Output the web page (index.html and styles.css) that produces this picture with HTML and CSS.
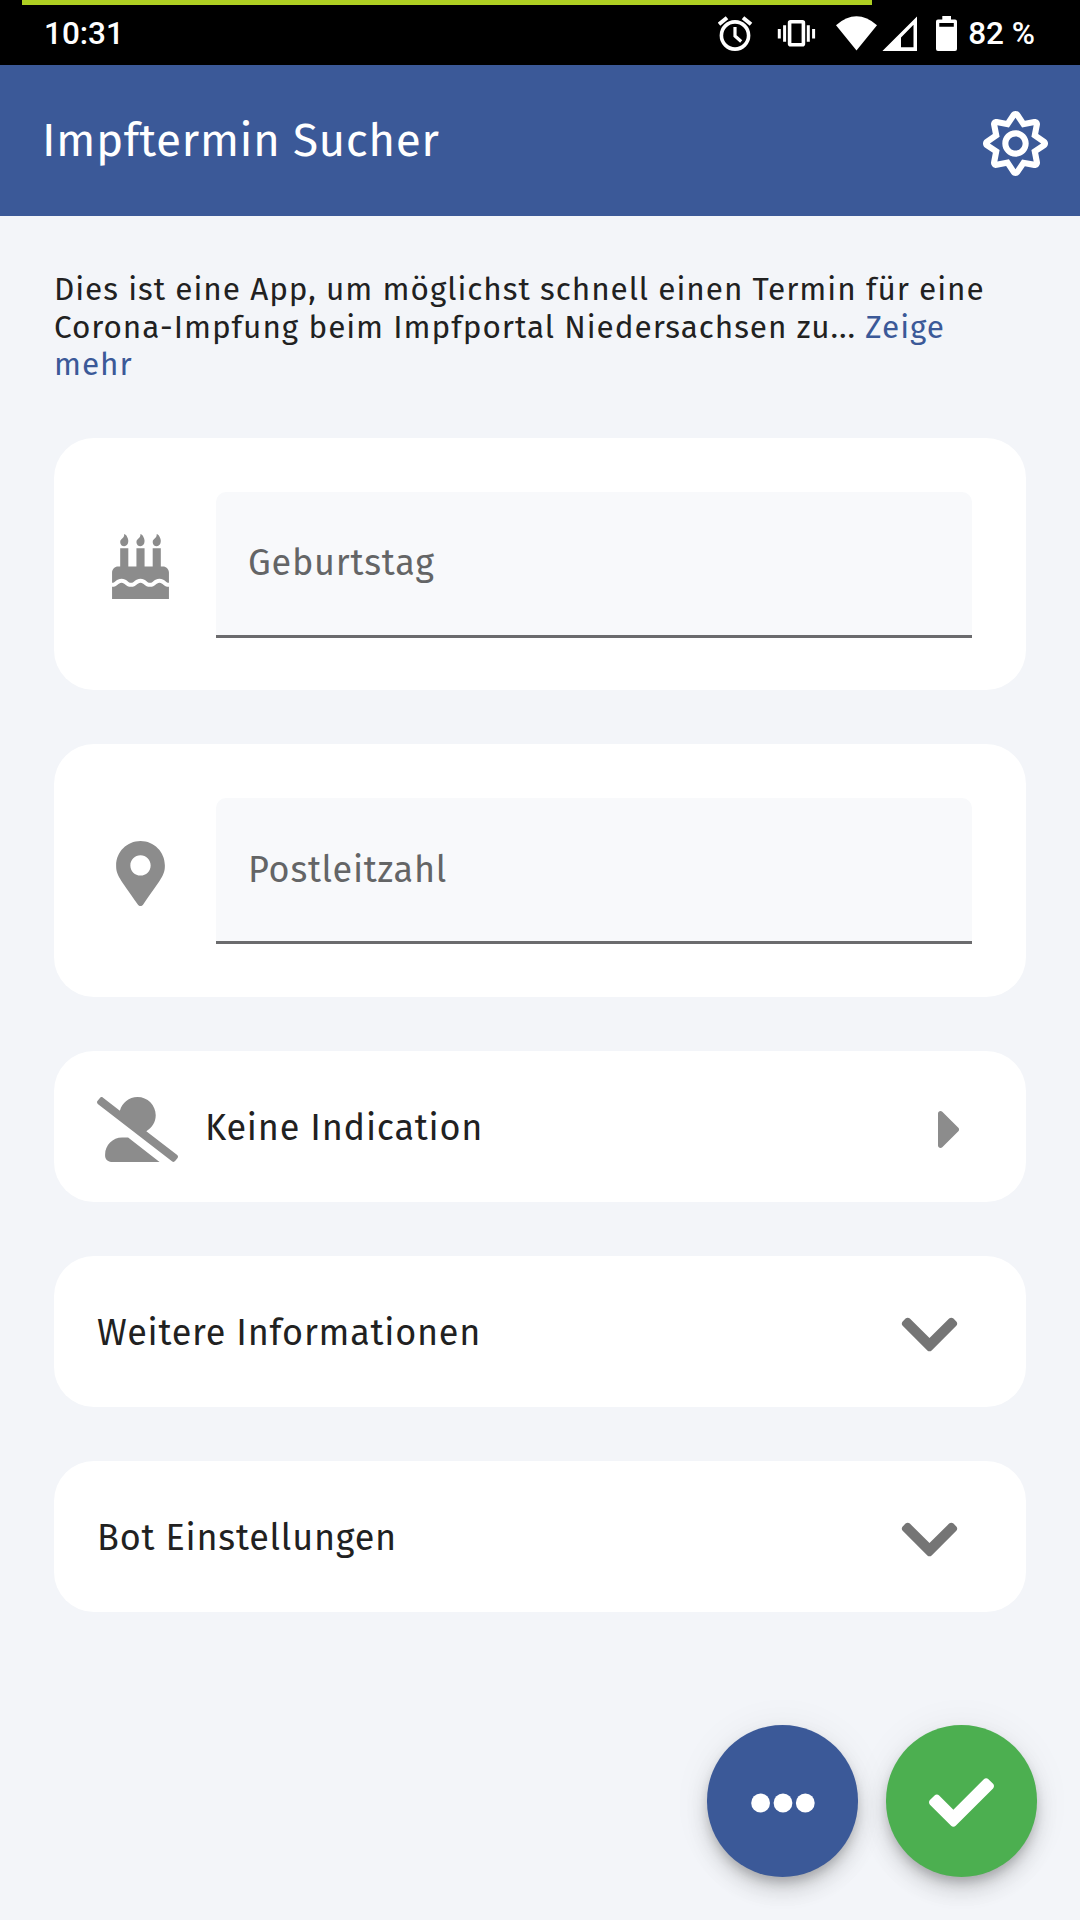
FILE: index.html
```html
<!DOCTYPE html>
<html lang="de">
<head>
<meta charset="utf-8">
<title>Impftermin Sucher</title>
<link rel="stylesheet" href="styles.css">
</head>
<body>
<div class="statusbar">
  <div class="progress"></div>
  <span class="clock">10:31</span>
  <svg class="status-icons" viewBox="718 15 240 36" width="240" height="36" fill="none" stroke="#fff">
    <g stroke-width="3.6">
      <circle cx="735" cy="34.5" r="13.6"/>
      <path d="M735 26v9l6.200 5.500" stroke-width="3.200"/>
      <path d="M719 23.200l8-6.500M751 23.200l-8-6.500" stroke-width="4"/>
    </g>
    <rect x="789.600" y="20.800" width="13.800" height="23" rx="1" stroke-width="3.600"/>
    <path d="M784.600 24.300v16.400M808.300 24.300v16.400M779.300 28v9.500M813.600 28v9.500" stroke-width="3"/>
    <path d="M836 24.200Q856.500 6.500 877 24.200L856.500 49.500z" fill="#fff" stroke="none"/>
    <path d="M882.400 50L917 15.500V50zM901 46.300h12.500V23.800L901 36.400z" fill="#fff" fill-rule="evenodd" stroke="none"/>
    <path d="M942.300 15h8.700v3.500h4q2 0 2 2V48q0 2-2 2H938q-2 0-2-2V20.500q0-2 2-2h4.300zM939.300 22v3.800h14.500V22z" fill="#fff" fill-rule="evenodd" stroke="none"/>
  </svg>
  <span class="battery">82 %</span>
</div>

<header class="appbar">
  <h1 class="title">Impftermin Sucher</h1>
  <svg class="icon" viewBox="0 0 512 512" width="65" height="65"><path d="M494.200 221.900l-59.800-40.500 13.700-71c2.600-13.200-1.600-26.800-11.100-36.400-9.600-9.500-23.200-13.700-36.200-11.100l-70.900 13.700-40.400-59.900c-15.100-22.300-51.900-22.300-67 0l-40.400 59.900-70.800-13.700C98 60.400 84.500 64.500 75 74.100c-9.500 9.600-13.700 23.100-11.100 36.300l13.700 71-59.800 40.500C6.600 229.500 0 242 0 255.500s6.700 26 17.800 33.500l59.800 40.500-13.700 71c-2.600 13.200 1.600 26.800 11.100 36.300 9.500 9.500 22.900 13.700 36.300 11.100l70.800-13.700 40.400 59.900C230 505.300 242.600 512 256 512s26-6.700 33.500-17.800l40.400-59.900 70.900 13.700c13.400 2.700 26.800-1.600 36.300-11.100 9.500-9.500 13.600-23.100 11.100-36.300l-13.700-71 59.800-40.500c11.100-7.500 17.800-20.100 17.800-33.600-.1-13.600-6.700-26.100-17.900-33.700zm-112.900 85.600l17.600 91.200-91-17.600L256 458l-51.900-77-90.900 17.600 17.600-91.200-76.800-52 76.800-52-17.600-91.200 91 17.600L256 53l51.900 76.900 91-17.600-17.600 91.100 76.800 52-76.800 52.100zM256 152c-57.300 0-104 46.700-104 104s46.700 104 104 104 104-46.700 104-104-46.700-104-104-104zm0 160c-30.900 0-56-25.100-56-56s25.100-56 56-56 56 25.100 56 56-25.100 56-56 56z"/></svg>
</header>

<main class="content">
  <p class="intro">Dies ist eine App, um möglichst schnell einen Termin für eine Corona-Impfung beim Impfportal Niedersachsen zu... <a class="more">Zeige mehr</a></p>

  <section class="card card-field">
    <svg class="icon" viewBox="0 0 448 512" width="57" height="65"><path d="M448 384c-28.020 0-31.260-32-74.500-32-43.430 0-46.825 32-74.750 32-27.695 0-31.454-32-74.750-32-42.842 0-47.218 32-74.500 32-28.148 0-31.202-32-74.750-32-43.547 0-46.653 32-74.750 32v-80c0-26.500 21.500-48 48-48h16V112h64v144h64V112h64v144h64V112h64v144h16c26.500 0 48 21.500 48 48v80zm0 128H0v-96c43.356 0 46.767-32 74.750-32 27.951 0 31.253 32 74.750 32 42.843 0 47.217-32 74.500-32 28.148 0 31.201 32 74.750 32 43.357 0 46.767-32 74.750-32 27.488 0 31.252 32 74.500 32v96zM96 96c-17.750 0-32-14.250-32-32 0-31 32-23 32-64 12 0 32 29.500 32 56s-14.250 40-32 40zm128 0c-17.750 0-32-14.250-32-32 0-31 32-23 32-64 12 0 32 29.500 32 56s-14.250 40-32 40zm128 0c-17.750 0-32-14.250-32-32 0-31 32-23 32-64 12 0 32 29.500 32 56s-14.250 40-32 40z"/></svg>
    <div class="field">Geburtstag</div>
  </section>

  <section class="card card-field">
    <svg class="icon" viewBox="0 0 384 512" width="49" height="65"><path d="M172.268 501.670C26.970 291.031 0 269.413 0 192 0 85.961 85.961 0 192 0s192 85.961 192 192c0 77.413-26.970 99.031-172.268 309.670-9.535 13.774-29.930 13.773-39.464 0zM192 272c44.183 0 80-35.817 80-80s-35.817-80-80-80-80 35.817-80 80 35.817 80 80 80z"/></svg>
    <div class="field">Postleitzahl</div>
  </section>

  <section class="card card-row">
    <svg class="icon" viewBox="0 0 640 512" width="81" height="65"><path d="M633.800 458.100L389.600 269.300C433.800 244.700 464 198.100 464 144 464 64.500 399.500 0 320 0c-67.100 0-123 46.100-139 108.200L45.500 3.400C38.500-2 28.500-.8 23 6.200L3.400 31.400c-5.400 7-4.200 17 2.800 22.400l588.400 454.700c7 5.400 17 4.200 22.500-2.800l19.600-25.300c5.400-6.800 4.100-16.900-2.900-22.300zM198.400 320C124.200 320 64 380.200 64 454.400v9.600c0 26.500 21.500 48 48 48h382.200L245.800 320h-47.400z"/></svg>
    <span class="row-label">Keine Indication</span>
    <svg class="icon caret" viewBox="0 0 192 512" width="24" height="65"><path d="M0 384.662V127.338c0-17.818 21.543-26.741 34.142-14.142l128.659 128.659c7.810 7.810 7.810 20.474 0 28.284L34.142 398.804C21.543 411.404 0 402.480 0 384.662z"/></svg>
  </section>

  <section class="card card-row">
    <span class="row-label">Weitere Informationen</span>
    <svg class="icon chevron" viewBox="0 0 448 512" width="57" height="65"><path d="M207.029 381.476L12.686 187.132c-9.373-9.373-9.373-24.569 0-33.941l22.667-22.667c9.357-9.357 24.522-9.375 33.901-.04L224 284.505l154.745-154.021c9.379-9.335 24.544-9.317 33.901.04l22.667 22.667c9.373 9.373 9.373 24.569 0 33.941L240.971 381.476c-9.373 9.372-24.569 9.372-33.942 0z"/></svg>
  </section>

  <section class="card card-row">
    <span class="row-label">Bot Einstellungen</span>
    <svg class="icon chevron" viewBox="0 0 448 512" width="57" height="65"><path d="M207.029 381.476L12.686 187.132c-9.373-9.373-9.373-24.569 0-33.941l22.667-22.667c9.357-9.357 24.522-9.375 33.901-.04L224 284.505l154.745-154.021c9.379-9.335 24.544-9.317 33.901.04l22.667 22.667c9.373 9.373 9.373 24.569 0 33.941L240.971 381.476c-9.373 9.372-24.569 9.372-33.942 0z"/></svg>
  </section>
</main>

<footer class="actions">
  <button class="fab fab-more" aria-label="Mehr">
    <svg class="icon" viewBox="0 0 64 20" width="64" height="20"><circle cx="9.600" cy="10" r="9.400"/><circle cx="32" cy="10" r="9.400"/><circle cx="54.300" cy="10" r="9.400"/></svg>
  </button>
  <button class="fab fab-ok" aria-label="Bestätigen">
    <svg class="icon" viewBox="0 0 512 512" width="65" height="65"><path d="M173.898 439.404l-166.400-166.400c-9.997-9.997-9.997-26.206 0-36.204l36.203-36.204c9.997-9.998 26.207-9.998 36.204 0L192 312.690 432.095 72.596c9.997-9.997 26.207-9.997 36.204 0l36.203 36.204c9.997 9.997 9.997 26.206 0 36.204l-294.400 294.401c-9.998 9.997-26.207 9.997-36.204-.001z"/></svg>
  </button>
</footer>
</body>
</html>
```
FILE: styles.css
```css
* {
  box-sizing: border-box;
}

body {
  margin: 0;
  width: 1080px;
  height: 1920px;
  display: flex;
  flex-direction: column;
  overflow: hidden;
  background: #f3f5f9;
  color: #212121;
  font-family: "Fira Sans", "Noto Sans CJK SC", sans-serif;
  font-size: 36px;
  letter-spacing: 0.77px;
}

.icon {
  display: block;
  flex: none;
  margin-top: 6px;
  fill: currentColor;
}

.statusbar {
  position: relative;
  flex: none;
  height: 65px;
  padding: 2px 45px 0 44px;
  display: flex;
  align-items: center;
  background: #000;
  color: #fff;
  font: 500 31.5px/40px Roboto, sans-serif;
  letter-spacing: 0;
}

.clock,
.battery {
  margin-top: 1px;
}

.progress {
  position: absolute;
  top: 0;
  left: 22px;
  width: 850px;
  height: 5px;
  background: #aecf22;
}

.status-icons {
  margin-left: auto;
  margin-right: 10px;
}

.appbar {
  flex: none;
  height: 151px;
  padding: 0 32px 0 42px;
  display: flex;
  align-items: center;
  justify-content: space-between;
  background: #3b5998;
  color: #fff;
}

.title {
  margin: 0;
  font-size: 46px;
  font-weight: 400;
  line-height: 54px;
  letter-spacing: 0.46px;
}

.content {
  flex: 1;
  padding: 54px 54px 0;
  display: flex;
  flex-direction: column;
  gap: 54px;
}

.intro {
  margin: 0;
  padding-top: 1.2px;
  font-size: 31.5px;
  line-height: 37.5px;
  letter-spacing: 0.96px;
}

.more {
  color: #3b5998;
}

.card {
  flex: none;
  display: flex;
  align-items: center;
  border-radius: 40px;
  background: #fff;
}

.card-field {
  height: 252.5px;
  padding: 0 54px 0 43px;
  display: grid;
  grid-template-columns: 87px 1fr;
  column-gap: 32px;
}

.card-field .icon {
  justify-self: center;
  color: #8c8c8c;
}

.field {
  height: 146px;
  margin-top: 2px;
  padding: 0 32px;
  display: flex;
  align-items: center;
  border-bottom: 3px solid #6b6b6d;
  border-radius: 10px 10px 0 0;
  background: #f8f9fb;
  color: #646566;
}

.card-row {
  height: 151px;
  padding: 0 43px;
  gap: 27px;
}

.card-row .icon {
  color: #8c8c8c;
}

.row-label {
  flex: 1;
  margin-top: 4px;
}

.card-row .caret {
  margin-right: 21px;
}

.card-row .chevron {
  margin-right: 25px;
  color: #757575;
}

.actions {
  flex: none;
  padding: 0 43px 43.5px;
  display: flex;
  justify-content: flex-end;
  gap: 27.5px;
}

.fab {
  width: 151.3px;
  height: 151.3px;
  padding: 0;
  border: 0;
  border-radius: 50%;
  display: flex;
  align-items: center;
  justify-content: center;
  color: #fff;
  box-shadow: 0 7px 11px -2px rgba(0, 0, 0, 0.2), 0 13px 22px rgba(0, 0, 0, 0.14), 0 2px 40px rgba(0, 0, 0, 0.06);
}

.fab-more {
  background: #3b5998;
}

.fab-more .icon {
  margin-top: 5px;
}

.fab-ok {
  background: #4caf50;
}

.fab-ok .icon {
  margin-top: 4px;
}
```
